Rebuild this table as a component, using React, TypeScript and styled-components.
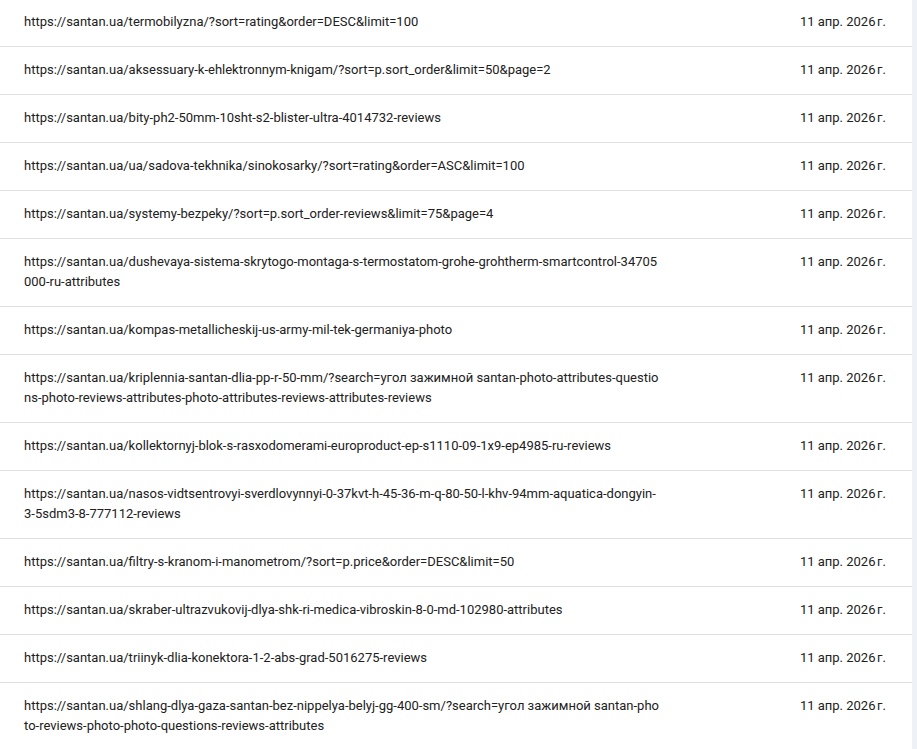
import styled, { createGlobalStyle } from "styled-components";

const GlobalStyle = createGlobalStyle`
  html, body {
    margin: 0;
    padding: 0;
    background: #eef1f6;
  }
  body {
    font-family: Roboto, "Noto Sans", Arial, sans-serif;
  }
`;

// list is scrolled by a pixel in the reference
const Card = styled.div`
  width: 912px;
  margin-top: -1px;
  background: #ffffff;
  min-height: 100vh;
`;

const Row = styled.div`
  display: grid;
  grid-template-columns: 636px 1fr auto;
  padding: 13px 26px 14px 24px;
  border-bottom: 1px solid #e0e0e0;
  font-size: 13px;
  line-height: 20px;
  color: #212121;
`;

const Url = styled.div`
  word-break: break-all;
`;

const DateCell = styled.div`
  grid-column: 3;
  white-space: nowrap;
  text-align: right;
`;

const urls = [
  "https://santan.ua/termobilyzna/?sort=rating&order=DESC&limit=100",
  "https://santan.ua/aksessuary-k-ehlektronnym-knigam/?sort=p.sort_order&limit=50&page=2",
  "https://santan.ua/bity-ph2-50mm-10sht-s2-blister-ultra-4014732-reviews",
  "https://santan.ua/ua/sadova-tekhnika/sinokosarky/?sort=rating&order=ASC&limit=100",
  "https://santan.ua/systemy-bezpeky/?sort=p.sort_order-reviews&limit=75&page=4",
  "https://santan.ua/dushevaya-sistema-skrytogo-montaga-s-termostatom-grohe-grohtherm-smartcontrol-34705000-ru-attributes",
  "https://santan.ua/kompas-metallicheskij-us-army-mil-tek-germaniya-photo",
  "https://santan.ua/kriplennia-santan-dlia-pp-r-50-mm/?search=угол зажимной santan-photo-attributes-questions-photo-reviews-attributes-photo-attributes-reviews-attributes-reviews",
  "https://santan.ua/kollektornyj-blok-s-rasxodomerami-europroduct-ep-s1110-09-1x9-ep4985-ru-reviews",
  "https://santan.ua/nasos-vidtsentrovyi-sverdlovynnyi-0-37kvt-h-45-36-m-q-80-50-l-khv-94mm-aquatica-dongyin-3-5sdm3-8-777112-reviews",
  "https://santan.ua/filtry-s-kranom-i-manometrom/?sort=p.price&order=DESC&limit=50",
  "https://santan.ua/skraber-ultrazvukovij-dlya-shk-ri-medica-vibroskin-8-0-md-102980-attributes",
  "https://santan.ua/triinyk-dlia-konektora-1-2-abs-grad-5016275-reviews",
  "https://santan.ua/shlang-dlya-gaza-santan-bez-nippelya-belyj-gg-400-sm/?search=угол зажимной santan-photo-reviews-photo-photo-questions-reviews-attributes",
];

export default function App() {
  return (
    <>
      <GlobalStyle />
      <Card>
        {urls.map((url, i) => (
          <Row key={i}>
            <Url>{url}</Url>
            <DateCell>11 апр. 2026{"\u202F"}г.</DateCell>
          </Row>
        ))}
      </Card>
    </>
  );
}
